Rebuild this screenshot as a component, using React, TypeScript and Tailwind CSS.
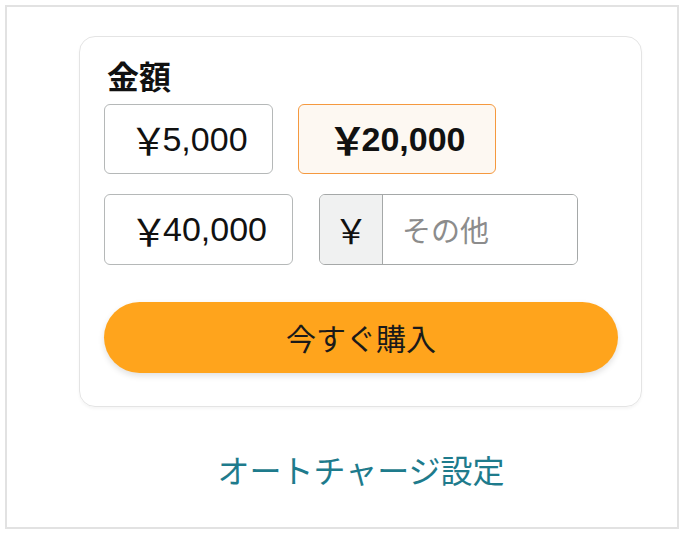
import React from 'react';

const presets = [
  { label: '5,000', selected: false },
  { label: '20,000', selected: true },
];

const App = () => {
  return (
    <div className="h-[534px] w-[683px] bg-white p-[5px] font-['Liberation_Sans','Noto_Sans_CJK_JP',sans-serif] text-[#111]">
      <div className="flex h-[524px] w-[674px] flex-col items-start border-2 border-[#e2e2e2] pt-[29px]">
        <div className="ml-[72px] h-[371px] w-[563px] rounded-[16px] border border-[#e4e4e4] px-[24px] pt-[19px] shadow-[0_2px_3px_rgba(0,0,0,0.04)]">
          <h2 className="ml-[3px] text-[32px] leading-[38px] font-bold font-['Noto_Sans_CJK_JP',sans-serif]">金額</h2>

          <div className="mt-[10px] flex gap-[25px]">
            <button className="flex h-[70px] w-[169px] items-center justify-center rounded-[6px] border border-[#b5b8b8] bg-white text-[34px]">
              <span className="mr-[-5px] text-[38px] leading-none font-['Noto_Sans_CJK_JP',sans-serif]">￥</span>
              {presets[0].label}
            </button>
            <button className="flex h-[70px] w-[198px] items-center justify-center rounded-[6px] border border-[#f5993f] bg-[#fdf8f2] text-[34px] font-bold">
              <span className="mr-[-5px] text-[38px] leading-none font-['Noto_Sans_CJK_JP',sans-serif]">￥</span>
              {presets[1].label}
            </button>
          </div>

          <div className="mt-[20px] flex gap-[26px]">
            <button className="flex h-[71px] w-[189px] items-center justify-center rounded-[6px] border border-[#b5b8b8] bg-white text-[34px]">
              <span className="mr-[-5px] text-[38px] leading-none font-['Noto_Sans_CJK_JP',sans-serif]">￥</span>
              40,000
            </button>
            <div className="flex h-[71px] w-[259px] overflow-hidden rounded-[6px] border border-[#a5a8a8]">
              <div className="flex w-[63px] items-center justify-center border-r border-[#a5a8a8] bg-[#f0f1f1] text-[34px] font-['Noto_Sans_CJK_JP',sans-serif]">
                ￥
              </div>
              <input
                className="min-w-0 flex-1 bg-white pl-[19px] text-[29px] outline-none placeholder:text-[#8c8c8c] font-['Noto_Sans_CJK_JP',sans-serif]"
                placeholder="その他"
              />
            </div>
          </div>

          <button className="mt-[37px] flex h-[71px] w-[514px] items-center justify-center rounded-full bg-[#ffa41c] text-[30px] text-[#1a1a1a] shadow-[0_3px_6px_rgba(0,0,0,0.12)] font-['Noto_Sans_CJK_JP',sans-serif]">
            今すぐ購入
          </button>
        </div>

        <a className="mt-[44px] ml-[38px] self-center text-[32px] leading-[36px] text-[#1e7b8c] font-['Noto_Sans_CJK_JP',sans-serif]">
          オートチャージ設定
        </a>
      </div>
    </div>
  );
};

export default App;
